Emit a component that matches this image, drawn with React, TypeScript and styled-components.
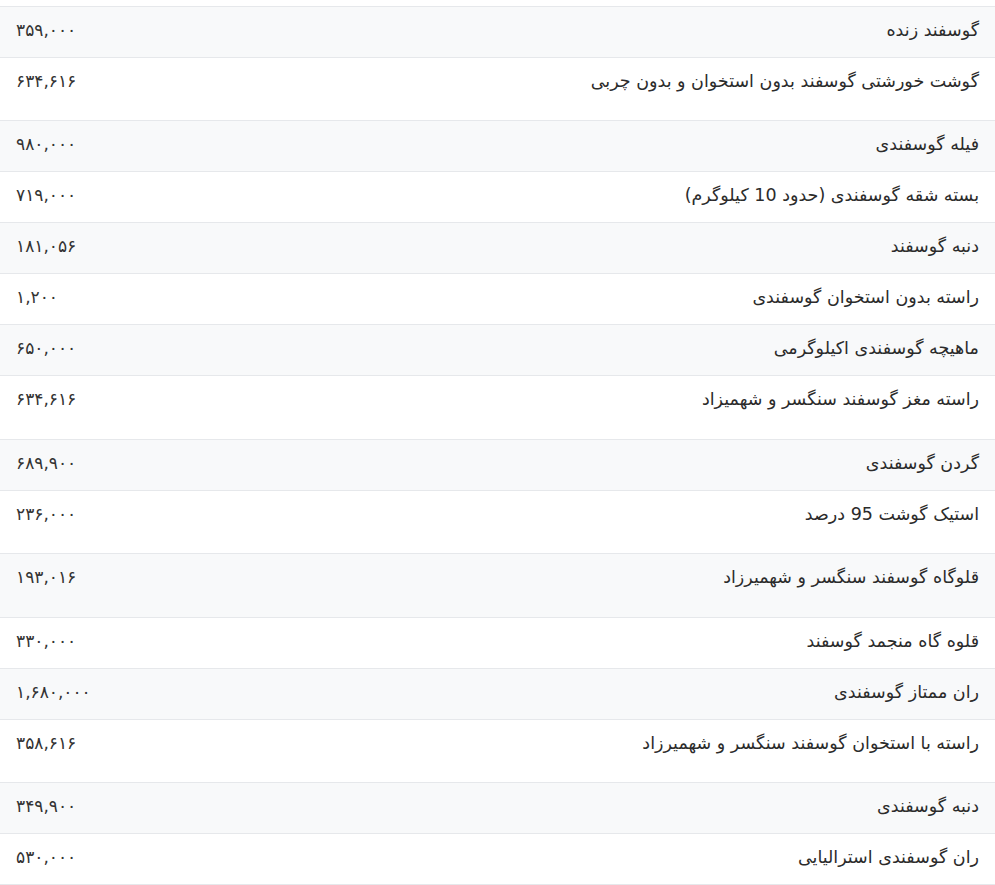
import React from "react";
import styled, { createGlobalStyle } from "styled-components";

const Global = createGlobalStyle`
  html, body { margin: 0; padding: 0; background: #ffffff; }
  body { font-family: "DejaVu Sans", "Noto Sans", sans-serif; }
`;

const Page = styled.div`
  padding-top: 6px;
`;

const Table = styled.div`
  direction: rtl;
  display: flex;
  flex-direction: column;
  border-bottom: 1px solid #e6e8eb;
`;

const Row = styled.div<{ $striped: boolean; $tall: boolean }>`
  display: flex;
  justify-content: space-between;
  align-items: flex-start;
  box-sizing: border-box;
  height: ${(p) => (p.$tall ? "63.4px" : "51px")};
  padding: 10px 16px 0 16px;
  border-top: 1px solid #e6e8eb;
  background: ${(p) => (p.$striped ? "#f8f9fa" : "#ffffff")};
  color: #2b2b2b;
`;

const Name = styled.div`
  font-size: 17.5px;
  line-height: 26px;
  text-align: right;
`;

const Price = styled.div`
  direction: ltr;
  font-size: 17px;
  line-height: 26px;
  text-align: left;
  color: #333333;
`;

const rows: { name: string; price: string; tall?: boolean }[] = [
  { name: "گوسفند زنده", price: "۳۵۹,۰۰۰" },
  { name: "گوشت خورشتی گوسفند بدون استخوان و بدون چربی", price: "۶۳۴,۶۱۶", tall: true },
  { name: "فیله گوسفندی", price: "۹۸۰,۰۰۰" },
  { name: "بسته شقه گوسفندی (حدود 10 کیلوگرم)", price: "۷۱۹,۰۰۰" },
  { name: "دنبه گوسفند", price: "۱۸۱,۰۵۶" },
  { name: "راسته بدون استخوان گوسفندی", price: "۱,۲۰۰" },
  { name: "ماهیچه گوسفندی اکیلوگرمی", price: "۶۵۰,۰۰۰" },
  { name: "راسته مغز گوسفند سنگسر و شهمیزاد", price: "۶۳۴,۶۱۶", tall: true },
  { name: "گردن گوسفندی", price: "۶۸۹,۹۰۰" },
  { name: "استیک گوشت 95 درصد", price: "۲۳۶,۰۰۰", tall: true },
  { name: "قلوگاه گوسفند سنگسر و شهمیرزاد", price: "۱۹۳,۰۱۶", tall: true },
  { name: "قلوه گاه منجمد گوسفند", price: "۳۳۰,۰۰۰" },
  { name: "ران ممتاز گوسفندی", price: "۱,۶۸۰,۰۰۰" },
  { name: "راسته با استخوان گوسفند سنگسر و شهمیرزاد", price: "۳۵۸,۶۱۶", tall: true },
  { name: "دنبه گوسفندی", price: "۳۴۹,۹۰۰" },
  { name: "ران گوسفندی استرالیایی", price: "۵۳۰,۰۰۰" },
];

export default function App() {
  return (
    <Page>
      <Global />
      <Table>
        {rows.map((r, i) => (
          <Row key={i} $striped={i % 2 === 0} $tall={!!r.tall}>
            <Name>{r.name}</Name>
            <Price>{r.price}</Price>
          </Row>
        ))}
      </Table>
    </Page>
  );
}
